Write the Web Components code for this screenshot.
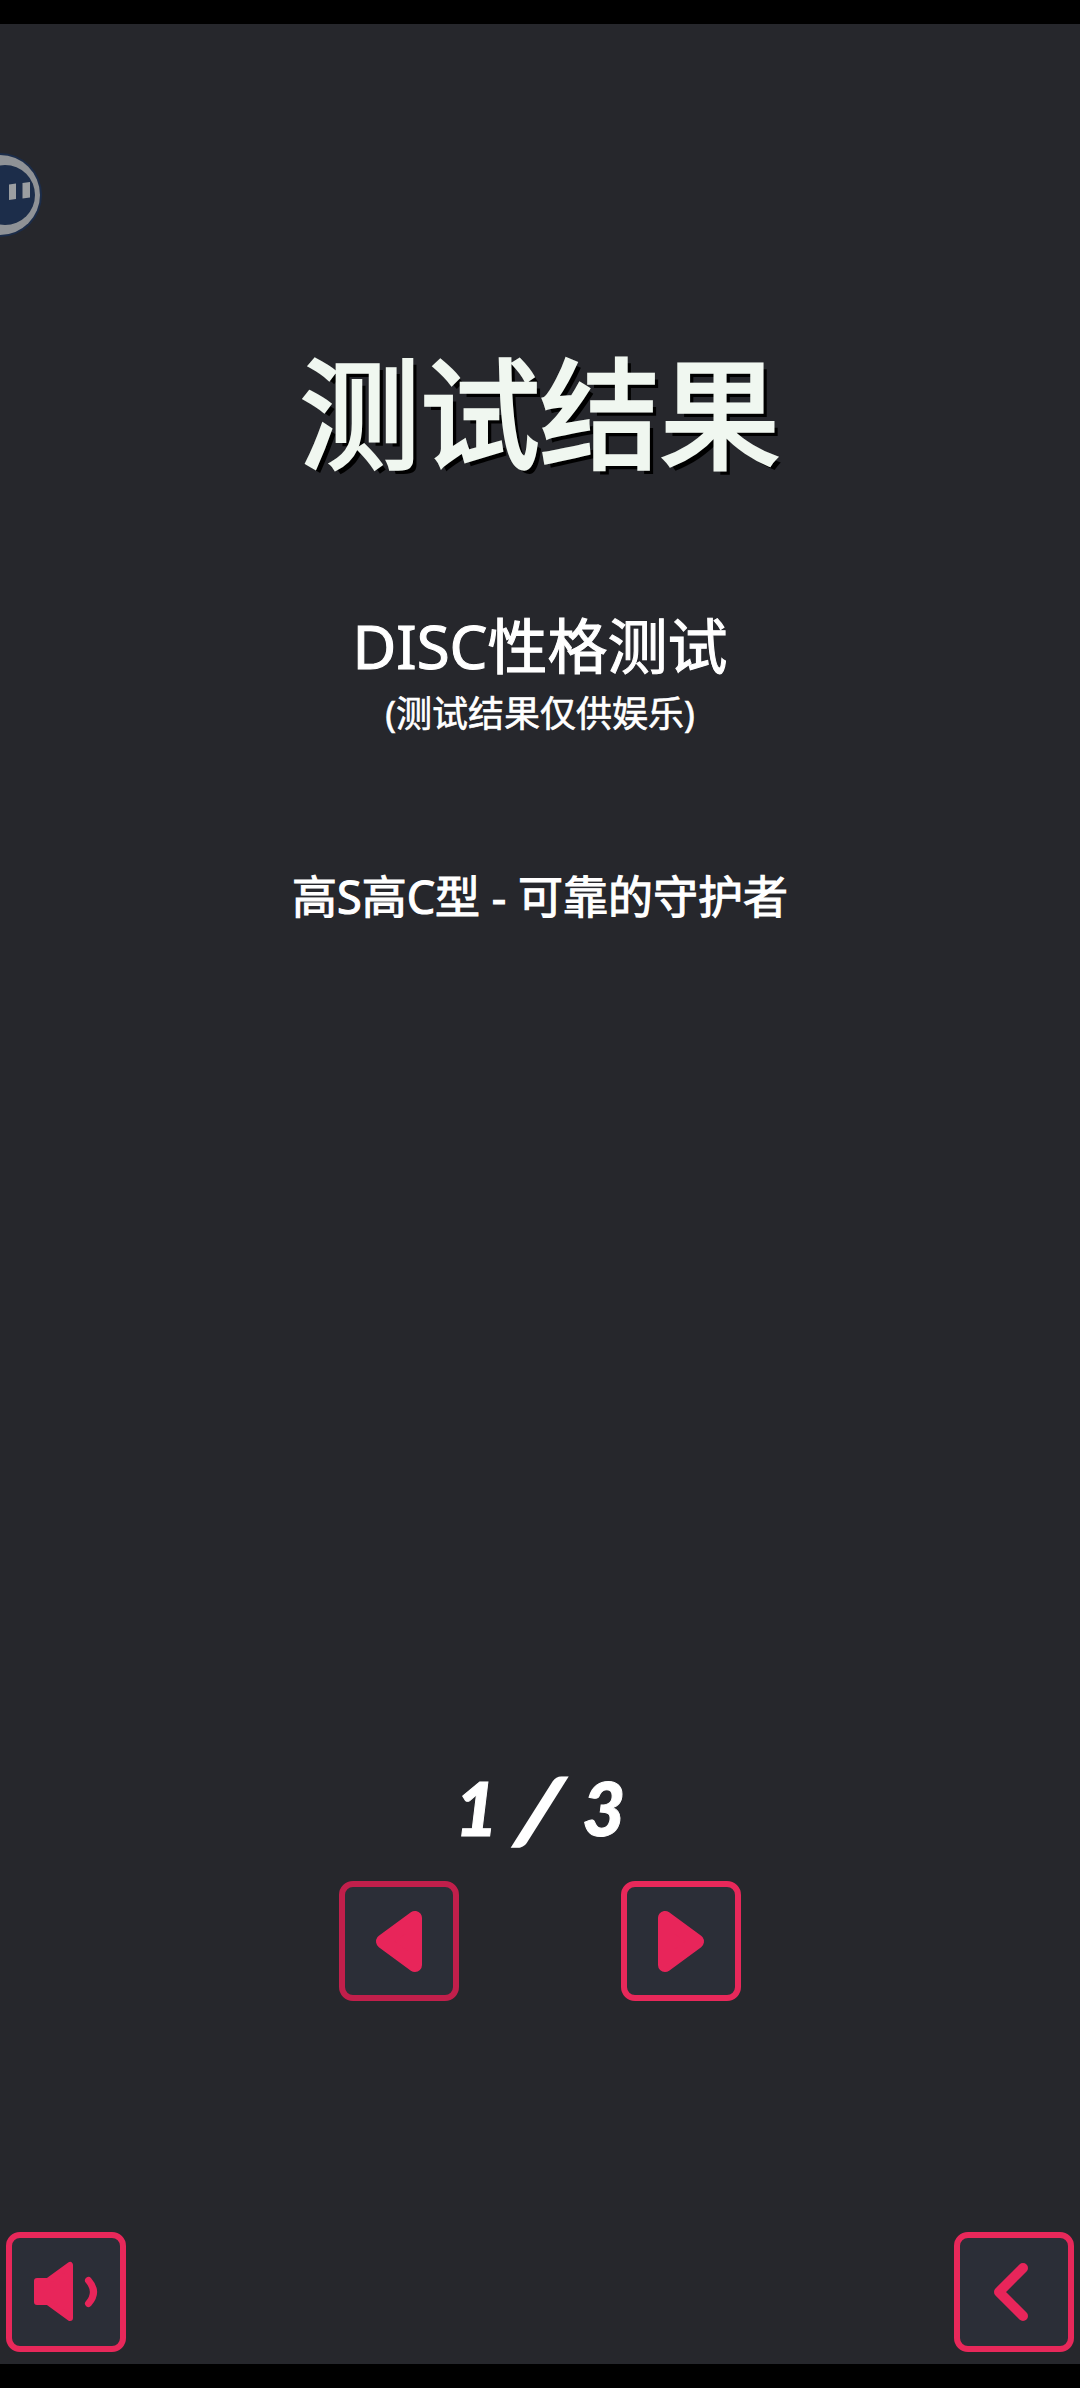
<!DOCTYPE html>
<html lang="zh">
<head>
<meta charset="utf-8">
<title>测试结果</title>
<style>
	html, body { margin: 0; height: 100%; background: #000; }
	body { font-family: "Noto Sans", "Noto Sans CJK SC", sans-serif; color: #fff; }
</style>
</head>
<body>

<template id="icon-button-template">
	<style>
		:host {
			display: flex;
			align-items: center;
			justify-content: center;
			box-sizing: border-box;
			width: 120px;
			height: 120px;
			border: 6px solid #e8285a;
			border-radius: 14px;
			background: #2b2e37;
		}
		:host([dim]) { border-color: #c11f4b; }
		svg { display: block; width: 108px; height: 108px; }
	</style>
	<svg viewBox="0 0 108 108"></svg>
</template>

<template id="robot-tab-template">
	<style>
		:host {
			position: absolute;
			left: -42px;
			top: 129px;
			display: block;
			width: 84px;
			height: 84px;
		}
		svg { display: block; }
	</style>
	<svg width="84" height="84" viewBox="0 0 84 84">
		<circle cx="42" cy="42" r="42" fill="#1c2d4a"/>
		<circle cx="42" cy="42" r="40" fill="#8f9296"/>
		<circle cx="47" cy="42" r="30" fill="#1c2d4a"/>
		<path d="M51 31.500 L58 30.500 V46 L51 47 Z M64.500 30 L72 29 V44.500 L64.500 45.500 Z" fill="#9b9ea1"/>
	</svg>
</template>

<template id="result-heading-template">
	<style>
		:host {
			display: block;
			margin-top: 324px;
			font: 400 120px/120px "Noto Sans CJK SC", sans-serif;
			-webkit-text-stroke: 3.500px #f0f7f0;
			color: #f0f7f0;
			text-align: center;
			text-shadow: 5px 5px 0 #000;
		}
	</style>
	<slot></slot>
</template>

<template id="result-summary-template">
	<style>
		:host {
			display: flex;
			flex-direction: column;
			align-items: center;
			margin-top: 142px;
			font-family: "Noto Sans", "Noto Sans CJK SC", sans-serif;
			color: #fff;
			-webkit-text-stroke: 1.100px #fff;
			text-align: center;
		}
		.name { font-size: 60px; line-height: 72px; }
		.note { margin-top: 10px; font-size: 36px; line-height: 44px; -webkit-text-stroke-width: 0.600px; }
		.kind { margin-top: 131px; font-size: 45px; line-height: 60px; }
	</style>
	<div class="name"><slot name="name"></slot></div>
	<div class="note"><slot name="note"></slot></div>
	<div class="kind"><slot name="kind"></slot></div>
</template>

<template id="page-count-template">
	<style>
		:host {
			display: flex;
			align-items: center;
			justify-content: center;
			height: 80px;
			font: italic 900 74px/80px Lato, sans-serif;
			-webkit-text-stroke: 1px #fff;
			color: #fff;
		}
		span { display: block; }
		.slash {
			margin: 0 23px;
			font-size: 88px;
			-webkit-text-stroke: 3px #fff;
			transform: skewX(-9deg);
		}
	</style>
	<span class="current"></span> <span class="slash">/</span> <span class="total"></span>
</template>

<template id="page-pager-template">
	<style>
		:host {
			display: flex;
			flex-direction: column;
			align-items: center;
			margin-top: auto;
			margin-bottom: 231px;
		}
		.count { margin-bottom: 33px; }
		.buttons { display: flex; gap: 162px; }
	</style>
	<div class="count"><slot name="count"></slot></div>
	<div class="buttons"><slot></slot></div>
</template>

<template id="result-screen-template">
	<style>
		:host {
			display: flex;
			flex-direction: column;
			box-sizing: border-box;
			height: 2388px;
			padding: 24px 0;
			background: #000;
		}
		main {
			position: relative;
			flex: 1;
			display: flex;
			flex-direction: column;
			overflow: hidden;
			background: #26272c;
		}
		.corners {
			display: flex;
			justify-content: space-between;
			padding: 0 6px 12px;
		}
	</style>
	<main>
		<slot name="tab"></slot>
		<slot></slot>
		<div class="corners"><slot name="corners"></slot></div>
	</main>
</template>

<result-screen>
	<robot-tab slot="tab"></robot-tab>
	<result-heading>测试结果</result-heading>
	<result-summary>
		<span slot="name">DISC性格测试</span>
		<span slot="note">(测试结果仅供娱乐)</span>
		<span slot="kind">高S高C型 - 可靠的守护者</span>
	</result-summary>
	<page-pager>
		<page-count slot="count" current="1" total="3"></page-count>
		<icon-button icon="prev" dim></icon-button>
		<icon-button icon="next"></icon-button>
	</page-pager>
	<icon-button slot="corners" icon="sound"></icon-button>
	<icon-button slot="corners" icon="back"></icon-button>
</result-screen>

<script>
	// simple helper, every element just clones its own template
	function cloneInto(el, id) {
		const shadowRoot = el.attachShadow({mode: 'open'});
		shadowRoot.appendChild(document.getElementById(id).content.cloneNode(true));
		return shadowRoot;
	}

	const PINK = '#e8255a';
	const ICONS = {
		prev: `<path d="M70 31 V78 L38 54.500 Z" fill="${PINK}" stroke="${PINK}" stroke-width="14" stroke-linejoin="round"/>`,
		next: `<path d="M38 31 V78 L70 54.500 Z" fill="${PINK}" stroke="${PINK}" stroke-width="14" stroke-linejoin="round"/>`,
		sound: `<path d="M25 43 H36 L58 27 V80 L36 64 H25 Z" fill="${PINK}" stroke="${PINK}" stroke-width="6" stroke-linejoin="round"/>` +
			`<path d="M76.500 42.500 Q86.500 54 76.500 65.500" fill="none" stroke="${PINK}" stroke-width="7" stroke-linecap="round"/>`,
		back: `<path d="M63 30 L39 54 L63 78" fill="none" stroke="${PINK}" stroke-width="10" stroke-linecap="round" stroke-linejoin="round"/>`
	};

	class IconButton extends HTMLElement {
		connectedCallback() {
			const shadowRoot = cloneInto(this, 'icon-button-template');
			shadowRoot.querySelector('svg').innerHTML = ICONS[this.getAttribute('icon')];
		}
	}

	class PageCount extends HTMLElement {
		connectedCallback() {
			const shadowRoot = cloneInto(this, 'page-count-template');
			shadowRoot.querySelector('.current').textContent = this.getAttribute('current');
			shadowRoot.querySelector('.total').textContent = this.getAttribute('total');
		}
	}

	class RobotTab extends HTMLElement {
		connectedCallback() { cloneInto(this, 'robot-tab-template'); }
	}
	class ResultHeading extends HTMLElement {
		connectedCallback() { cloneInto(this, 'result-heading-template'); }
	}
	class ResultSummary extends HTMLElement {
		connectedCallback() { cloneInto(this, 'result-summary-template'); }
	}
	class PagePager extends HTMLElement {
		connectedCallback() { cloneInto(this, 'page-pager-template'); }
	}
	class ResultScreen extends HTMLElement {
		connectedCallback() { cloneInto(this, 'result-screen-template'); }
	}

	customElements.define('icon-button', IconButton);
	customElements.define('page-count', PageCount);
	customElements.define('robot-tab', RobotTab);
	customElements.define('result-heading', ResultHeading);
	customElements.define('result-summary', ResultSummary);
	customElements.define('page-pager', PagePager);
	customElements.define('result-screen', ResultScreen);
</script>
</body>
</html>
